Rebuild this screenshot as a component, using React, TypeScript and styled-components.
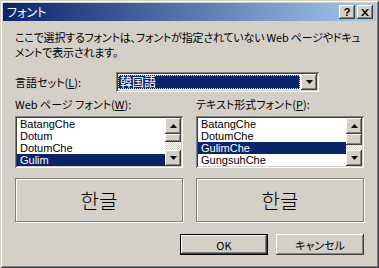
import React from 'react';
import styled, { createGlobalStyle } from 'styled-components';

const GlobalStyle = createGlobalStyle`
  html, body {
    margin: 0;
    padding: 0;
    background: #d4d0c8;
  }
  body {
    font-family: "Noto Sans CJK JP", "Liberation Sans", sans-serif;
    font-size: 11px;
    font-feature-settings: "palt";
    color: #000;
  }
`;

const raised = `
  box-shadow: inset -1px -1px #404040, inset 1px 1px #ffffff,
    inset -2px -2px #808080, inset 2px 2px #d4d0c8;
`;

const sunken = `
  box-shadow: inset 1px 1px #808080, inset -1px -1px #ffffff,
    inset 2px 2px #404040, inset -2px -2px #d4d0c8;
`;

const Window = styled.div`
  width: 379px;
  height: 268px;
  box-sizing: border-box;
  padding: 3px;
  display: flex;
  flex-direction: column;
  background: #d4d0c8;
  box-shadow: inset 1px 1px #d4d0c8, inset -1px -1px #404040,
    inset 2px 2px #ffffff, inset -2px -2px #808080;
`;

const TitleBar = styled.div`
  height: 18px;
  display: flex;
  align-items: center;
  padding: 0 3px 0 4px;
  background: linear-gradient(to right, #0a246a, #a6caf0);
  color: #fff;
`;

const Title = styled.div`
  flex: 1;
  font-size: 12px;
  line-height: 18px;
`;

const CaptionButton = styled.div<{ $gap?: number }>`
  width: 16px;
  height: 14px;
  box-sizing: border-box;
  display: flex;
  align-items: center;
  justify-content: center;
  background: #d4d0c8;
  color: #000;
  font-family: "Liberation Sans", sans-serif;
  font-weight: bold;
  font-size: 11px;
  line-height: 12px;
  margin-left: ${(p) => p.$gap ?? 0}px;
  ${raised}
`;

const Content = styled.div`
  flex: 1;
  display: flex;
  flex-direction: column;
  padding: 9px 12px 10px 12px;
`;

const Description = styled.p`
  margin: 0;
  line-height: 15px;
  letter-spacing: -0.2px;
  white-space: nowrap;
`;

const LangRow = styled.div`
  display: flex;
  align-items: center;
  height: 20px;
  margin-top: 12px;
`;

const LangLabel = styled.div`
  width: 101px;
  line-height: 14px;
`;

const Combo = styled.div`
  width: 203px;
  height: 20px;
  box-sizing: border-box;
  padding: 2px;
  display: flex;
  background: #fff;
  ${sunken}
`;

const ComboValue = styled.div`
  flex: 1;
  margin: 1px 1px 1px 0;
  padding-left: 2px;
  background: #0a246a;
  color: #fff;
  font-size: 12px;
  line-height: 14px;
  outline: 1px dotted #e8d860;
  outline-offset: -1px;
`;

const ArrowButton = styled.div`
  width: 16px;
  height: 16px;
  box-sizing: border-box;
  display: flex;
  align-items: center;
  justify-content: center;
  background: #d4d0c8;
  ${raised}
`;

const Columns = styled.div`
  display: grid;
  grid-template-columns: 168px 168px;
  column-gap: 13px;
  margin-top: 5px;
`;

const Column = styled.div`
  display: flex;
  flex-direction: column;
`;

const ColumnLabel = styled.div`
  line-height: 14px;
  margin-bottom: 5px;
  white-space: nowrap;
`;

const ListBox = styled.div`
  height: 52px;
  box-sizing: border-box;
  padding: 2px;
  display: flex;
  background: #fff;
  ${sunken}
`;

const Items = styled.div`
  flex: 1;
  display: flex;
  flex-direction: column;
`;

const Item = styled.div<{ $selected?: boolean }>`
  height: 12px;
  line-height: 12px;
  padding-left: 3px;
  font-family: "Liberation Sans", sans-serif;
  font-size: 11px;
  background: ${(p) => (p.$selected ? '#0a246a' : 'transparent')};
  color: ${(p) => (p.$selected ? '#fff' : '#000')};
`;

const ScrollBar = styled.div`
  width: 16px;
  display: flex;
  flex-direction: column;
`;

const Thumb = styled.div<{ $size: number }>`
  height: ${(p) => p.$size}px;
  background: #d4d0c8;
  ${raised}
`;

const Track = styled.div`
  flex: 1;
  background: repeating-conic-gradient(#d4d0c8 0 25%, #ffffff 0 50%) 0 0 / 2px 2px;
`;

const Preview = styled.div`
  margin-top: 10px;
  height: 44px;
  box-sizing: border-box;
  display: flex;
  align-items: center;
  justify-content: center;
  border: 1px solid #808080;
  box-shadow: inset 1px 1px #ffffff, 1px 1px #ffffff;
  font-family: "Noto Sans CJK KR", sans-serif;
  font-size: 20px;
  font-weight: 300;
`;

const ButtonRow = styled.div`
  display: flex;
  justify-content: flex-end;
  gap: 8px;
  margin-top: 12px;
`;

const Button = styled.div<{ $default?: boolean }>`
  width: 88px;
  height: 21px;
  box-sizing: border-box;
  display: flex;
  align-items: center;
  justify-content: center;
  background: #d4d0c8;
  border: ${(p) => (p.$default ? '1px solid #000' : 'none')};
  ${raised}
`;

const Arrow = ({ up }: { up?: boolean }) => (
  <svg width="7" height="4" viewBox="0 0 7 4">
    <polygon points={up ? '3.5,0 7,4 0,4' : '0,0 7,0 3.5,4'} fill="#000" />
  </svg>
);

const CloseGlyph = () => (
  <svg width="8" height="7" viewBox="0 0 8 7">
    <path d="M0 0h2l2 2.5 2-2.5h2L5 3.5 8 7H6L4 4.5 2 7H0l3-3.5z" fill="#000" />
  </svg>
);

type ListProps = { items: string[]; selected: number; thumb: number };

const FontList = ({ items, selected, thumb }: ListProps) => (
  <ListBox>
    <Items>
      {items.map((name, i) => (
        <Item key={name} $selected={i === selected}>
          {name}
        </Item>
      ))}
    </Items>
    <ScrollBar>
      <ArrowButton>
        <Arrow up />
      </ArrowButton>
      <Thumb $size={thumb} />
      <Track />
      <ArrowButton>
        <Arrow />
      </ArrowButton>
    </ScrollBar>
  </ListBox>
);

export default function App() {
  return (
    <>
      <GlobalStyle />
      <Window>
        <TitleBar>
          <Title>フォント</Title>
          <CaptionButton>?</CaptionButton>
          <CaptionButton $gap={2}>
            <CloseGlyph />
          </CaptionButton>
        </TitleBar>
        <Content>
          <Description>
            ここで選択するフォントは、フォントが指定されていない Web ページやドキュ
            <br />
            メントで表示されます。
          </Description>
          <LangRow>
            <LangLabel>
              言語セット(<u>L</u>):
            </LangLabel>
            <Combo>
              <ComboValue>韓国語</ComboValue>
              <ArrowButton>
                <Arrow />
              </ArrowButton>
            </Combo>
          </LangRow>
          <Columns>
            <Column>
              <ColumnLabel>
                Web ページ フォント(<u>W</u>):
              </ColumnLabel>
              <FontList items={['BatangChe', 'Dotum', 'DotumChe', 'Gulim']} selected={3} thumb={8} />
              <Preview>한글</Preview>
            </Column>
            <Column>
              <ColumnLabel>
                テキスト形式フォント(<u>P</u>):
              </ColumnLabel>
              <FontList
                items={['BatangChe', 'DotumChe', 'GulimChe', 'GungsuhChe']}
                selected={2}
                thumb={11}
              />
              <Preview>한글</Preview>
            </Column>
          </Columns>
          <ButtonRow>
            <Button $default>OK</Button>
            <Button>キャンセル</Button>
          </ButtonRow>
        </Content>
      </Window>
    </>
  );
}
